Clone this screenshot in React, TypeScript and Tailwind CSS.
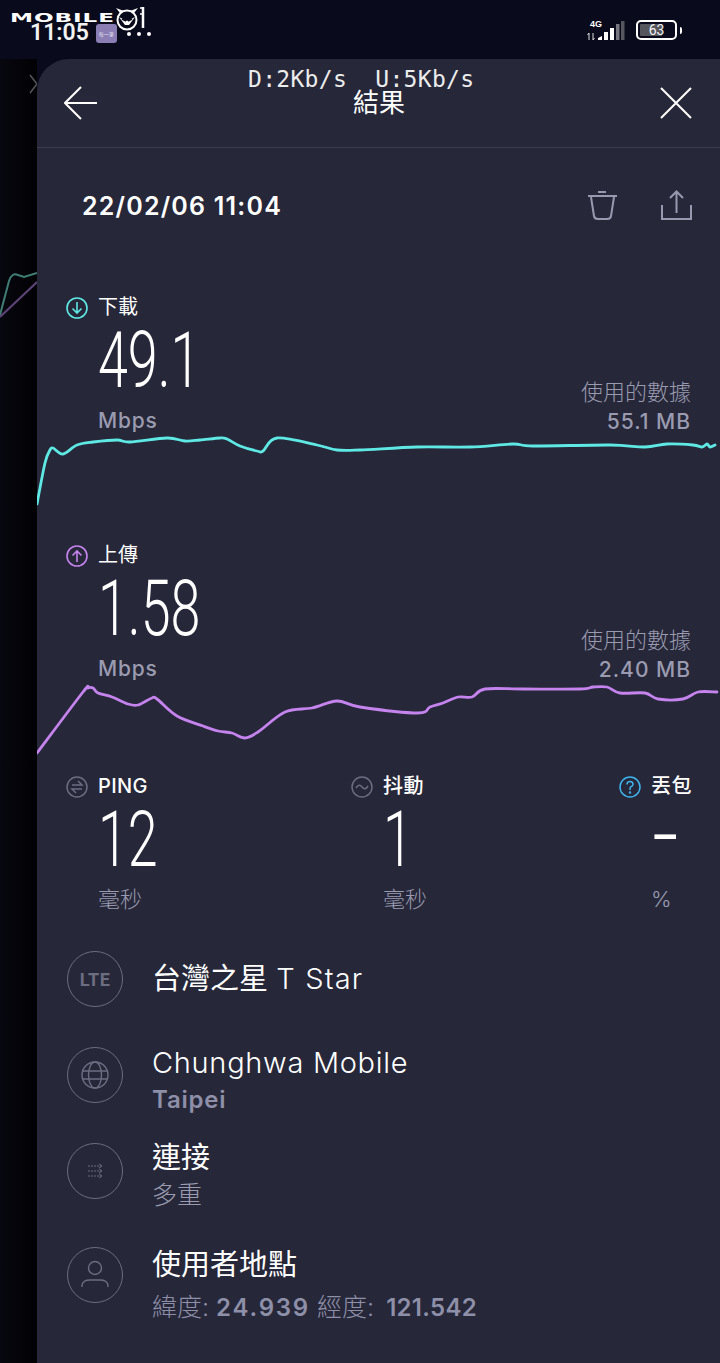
const sans = "font-['Inter','Noto_Sans_CJK_TC',sans-serif]";

const downloadPoints = [
  [0, 68], [8, 27], [13, 14], [16, 12], [26, 18], [40, 9], [56, 6], [80, 4], [93, 6], [130, 2], [148, 5], [163, 4],
  [183, 2], [190, 3], [203, 10], [220, 15], [226, 15], [240, 2], [280, 9], [300, 14], [323, 14], [380, 11], [433, 11],
  [476, 8], [496, 10], [573, 9], [608, 11], [630, 8], [656, 9], [665, 11], [670, 8], [673, 11], [678, 9],
];
const uploadPoints = [
  [0, 69], [46, 8], [51, 4], [56, 4], [61, 9], [75, 13], [91, 20], [101, 21], [115, 14], [120, 15], [140, 32], [166, 42],
  [181, 47], [195, 49], [208, 54], [221, 48], [248, 28], [275, 24], [300, 17], [323, 23], [381, 29], [393, 23], [406, 19],
  [421, 13], [435, 13], [448, 5], [486, 5], [543, 5], [556, 3], [570, 3], [583, 9], [608, 9], [621, 15], [646, 15],
  [661, 8], [680, 8],
];

// catmull-rom through the samples so the graph stays soft
function smooth(points: number[][]) {
  let d = `M${points[0][0]} ${points[0][1]}`;
  for (let i = 0; i < points.length - 1; i++) {
    const p0 = points[Math.max(i - 1, 0)];
    const p1 = points[i];
    const p2 = points[i + 1];
    const p3 = points[Math.min(i + 2, points.length - 1)];
    const c1x = p1[0] + (p2[0] - p0[0]) / 6;
    const c1y = p1[1] + (p2[1] - p0[1]) / 6;
    const c2x = p2[0] - (p3[0] - p1[0]) / 6;
    const c2y = p2[1] - (p3[1] - p1[1]) / 6;
    d += ` C${c1x.toFixed(1)} ${c1y.toFixed(1)} ${c2x.toFixed(1)} ${c2y.toFixed(1)} ${p2[0]} ${p2[1]}`;
  }
  return d;
}

function StatusBar() {
  return (
    <div className="relative flex h-[59px] items-start justify-between bg-[#090a1b] pl-[30px] pr-[38px] pt-[21px]">
      <div className="flex items-center">
        <span className="font-['Roboto',sans-serif] text-[23px] font-semibold leading-[24px] text-[#f2f2f2]">11:05</span>
        <div className="ml-[7px] mt-[1px] flex h-[19px] w-[21px] items-center justify-center rounded-[3px] bg-[#8a7eb4]">
          <span className="font-['Noto_Sans_CJK_TC',sans-serif] text-[5px] leading-none text-[#e8e4f4]">每一筆</span>
        </div>
        <div className="ml-[10px] mt-[1px] flex gap-[6px]">
          <span className="h-[4px] w-[4px] rounded-full bg-white" />
          <span className="h-[4px] w-[4px] rounded-full bg-white" />
          <span className="h-[4px] w-[4px] rounded-full bg-white" />
        </div>
      </div>
      <div className="-mt-[1px] flex items-center gap-[11px]">
        <div className="relative h-[20px] w-[38px]">
          <span className="absolute left-[3px] top-[-1px] font-['Liberation_Sans',sans-serif] text-[9px] font-bold leading-[11px] text-white">4G</span>
          <svg width="38" height="20" viewBox="0 0 38 20" className="absolute left-0 top-0">
            <path d="M2 13v7M0.5 15l1.5-2M6 13v7M7.5 18l-1.5 2" stroke="#ddd" strokeWidth="1" fill="none" />
            <path d="M11 20v-2l4-2v4z" fill="#fff" />
            <rect x="17" y="12" width="4" height="8" fill="#fff" />
            <rect x="23" y="8" width="4" height="12" fill="#fff" />
            <rect x="29" y="4" width="3.5" height="16" fill="#77787f" />
            <rect x="34" y="1" width="3.5" height="19" fill="#55565e" />
          </svg>
        </div>
        <div className="flex items-center gap-[3px]">
          <div className="relative flex h-[20px] w-[41px] items-center overflow-hidden rounded-[5px] border-2 border-white">
            <div className="ml-[2px] h-[12px] w-[22px] rounded-[1px] bg-[#55565e]" />
            <span className="absolute inset-0 text-center font-['Roboto',sans-serif] text-[14px] leading-[16px] text-[#f2f2f2]">63</span>
          </div>
          <div className="h-[7px] w-[2px] rounded-r-sm bg-white" />
        </div>
      </div>
      {/* watermark sits on top of the status bar */}
      <div className="absolute left-[10px] top-[4px] flex items-start">
        <span className="mt-[7px] inline-block w-[102px] origin-left scale-x-[1.78] font-['DejaVu_Sans',sans-serif] text-[13px] font-bold leading-[14px] tracking-[0.5px] text-white">
          MOBILE
        </span>
        <svg width="32" height="32" viewBox="0 0 32 32" className="mt-[1px] ml-[3px]">
          <circle cx="12" cy="15" r="9.5" fill="none" stroke="#fff" strokeWidth="2" />
          <path d="M5 8 L1 3 L9 6 M19 8 L23 3 L15 6" fill="#fff" />
          <path d="M4 12 L12 16 L20 12 L14 20 L10 20z" fill="#fff" />
          <path d="M7 14 L11 16 M17 14 L13 16" stroke="#090a1b" strokeWidth="1.5" />
          <path d="M28 2 V23" stroke="#fff" strokeWidth="2.5" />
          <path d="M25 3 H28 M25 9 H28" stroke="#fff" strokeWidth="1.5" />
        </svg>
      </div>
    </div>
  );
}

function BackdropStrip() {
  return (
    <div className="w-[37px] shrink-0 bg-gradient-to-r from-[#07070f] to-[#020205]">
      <svg width="37" height="340" viewBox="0 0 37 340">
        <path d="M30 16 L37 25 L30 34" fill="none" stroke="#55565c" strokeWidth="1.5" />
        <path d="M0 256 L9 222 Q12 213 18 216 L24 218 L37 214" fill="none" stroke="#3f7d75" strokeWidth="2" />
        <path d="M0 258 L37 223" fill="none" stroke="#5d4378" strokeWidth="2" />
      </svg>
    </div>
  );
}

function Header() {
  return (
    <div className="relative flex h-[89px] items-center justify-between border-b border-[#3a3b4d] pl-[27px] pr-[28px]">
      <svg width="34" height="34" viewBox="0 0 34 34" fill="none" stroke="#fff" strokeWidth="2">
        <path d="M33 17 H2 M17 1 L1 17 L17 33" />
      </svg>
      <span className={`${sans} text-[26px] leading-[32px] text-white`}>結果</span>
      <svg width="32" height="32" viewBox="0 0 32 32" fill="none" stroke="#fff" strokeWidth="2">
        <path d="M1 1 L31 31 M31 1 L1 31" />
      </svg>
      {/* network speed overlay */}
      <span className="absolute left-[211px] top-[7px] whitespace-pre font-['DejaVu_Sans_Mono',monospace] text-[23px] leading-[26px] tracking-[0.3px] text-[#ececec]">
        D:2Kb/s  U:5Kb/s
      </span>
    </div>
  );
}

function DateRow() {
  return (
    <div className="flex h-[116px] items-center justify-between pl-[45px] pr-[28px]">
      <span className={`${sans} text-[25px] font-semibold leading-[32px] tracking-[1.2px] text-white`}>22/02/06 11:04</span>
      <div className="flex items-center gap-[42px]">
        <svg width="32" height="32" viewBox="0 0 32 32" fill="none" stroke="#9899ae" strokeWidth="2">
          <path d="M1 6 H30 M11 2 H19 M4 7 L7 26 Q7.5 29 11 29 H20 Q23.500 29 24 26 L27 7" />
        </svg>
        <svg width="31" height="32" viewBox="0 0 31 32" fill="none" stroke="#9899ae" strokeWidth="2">
          <path d="M1 15 V29 H30 V15 M15.500 23 V2 M9 8 L15.500 1.500 L22 8" />
        </svg>
      </div>
    </div>
  );
}

function BigNumber({ value }: { value: string }) {
  return (
    <div className="h-[80px] w-[140px] origin-left scale-x-[0.69] whitespace-nowrap font-['Roboto',sans-serif] text-[78px] font-light leading-[80px] text-white">
      {value}
    </div>
  );
}

function SpeedSection({
  label,
  value,
  used,
  color,
  up,
  points,
  chartHeight,
}: {
  label: string;
  value: string;
  used: string;
  color: string;
  up: boolean;
  points: number[][];
  chartHeight: number;
}) {
  return (
    <div>
      <div className="flex items-end justify-between px-[29px]">
        <div>
          <div className="flex h-[27px] items-center gap-[10px]">
            <svg width="22" height="22" viewBox="0 0 22 22" fill="none" stroke={color} strokeWidth="1.6">
              <circle cx="11" cy="11" r="10" />
              {up ? <path d="M11 17 V6 M6.500 10.500 L11 6 L15.500 10.500" /> : <path d="M11 5 V16 M6.500 11.500 L11 16 L15.500 11.500" />}
            </svg>
            <span className={`${sans} text-[20px] leading-[25px] text-white`}>{label}</span>
          </div>
          <div className="pl-[32px]">
            <BigNumber value={value} />
            <div className={`${sans} mt-[5px] text-[21px] font-medium leading-[30px] tracking-[0.8px] text-[#9a9bb0]`}>Mbps</div>
          </div>
        </div>
        <div className={`${sans} text-right leading-[29px] text-[#9a9bb0]`}>
          <div className="text-[22px] font-light">使用的數據</div>
          <div className="text-[21px] font-medium tracking-[1px]">{used}</div>
        </div>
      </div>
      <svg width="683" height={chartHeight} viewBox={`0 0 683 ${chartHeight}`} className="block" fill="none" stroke={color} strokeWidth="2.800" strokeLinejoin="round" strokeLinecap="round">
        <path d={smooth(points)} />
      </svg>
    </div>
  );
}

function Stat({
  width,
  label,
  value,
  unit,
  icon,
}: {
  width: string;
  label: string;
  value: string;
  unit: string;
  icon: React.ReactNode;
}) {
  return (
    <div className={width}>
      <div className="flex h-[27px] items-center gap-[10px]">
        {icon}
        <span className={`${sans} text-[20px] font-medium leading-[25px] tracking-[0.4px] text-white`}>{label}</span>
      </div>
      <div className="pl-[32px]">
        {value === "-" ? (
          <div className="h-[80px] origin-left scale-x-[0.71] font-['Roboto',sans-serif] text-[62px] leading-[76px] text-white">–</div>
        ) : (
          <BigNumber value={value} />
        )}
        <div className={`${sans} mt-[4px] text-[22px] font-light leading-[30px] text-[#9a9bb0]`}>{unit}</div>
      </div>
    </div>
  );
}

function Circle({ children }: { children: React.ReactNode }) {
  return (
    <div className="flex h-[56px] w-[56px] shrink-0 items-center justify-center rounded-full border-[1.5px] border-[#6c6d80]">
      {children}
    </div>
  );
}

function Details() {
  return (
    <div className="mt-[37px] pl-[30px]">
      <div className="flex h-[96px] items-start gap-[29px]">
        <Circle>
          <span className="font-['Roboto',sans-serif] text-[18px] font-bold tracking-[0.5px] text-[#6c6d80]">LTE</span>
        </Circle>
        <span className={`${sans} mt-[12px] text-[29px] leading-[32px] text-white`}>
          台灣之星 <span className="text-[29px] font-light tracking-[1.2px]">T Star</span>
        </span>
      </div>
      <div className="flex h-[96px] items-start gap-[29px]">
        <Circle>
          <svg width="28" height="28" viewBox="0 0 28 28" fill="none" stroke="#6c6d80" strokeWidth="1.4">
            <circle cx="14" cy="14" r="13" />
            <ellipse cx="14" cy="14" rx="6.500" ry="13" />
            <path d="M1 10 H27 M1 18 H27" />
          </svg>
        </Circle>
        <div>
          <div className={`${sans} text-[29px] font-light leading-[32px] tracking-[0.7px] text-white`}>Chunghwa Mobile</div>
          <div className={`${sans} mt-[7px] text-[24px] font-semibold leading-[28px] tracking-[0.8px] text-[#8e8fa8]`}>Taipei</div>
        </div>
      </div>
      <div className="flex h-[104px] items-start gap-[29px]">
        <Circle>
          <svg width="16" height="16" viewBox="0 0 16 16" fill="none" stroke="#6c6d80" strokeWidth="1">
            <path d="M1 3 H14 M1 8 H14 M1 13 H14" strokeDasharray="2 1" />
            <path d="M12 1 L15 3 L12 5 M12 6 L15 8 L12 10 M12 11 L15 13 L12 15" />
          </svg>
        </Circle>
        <div className="-mt-[1px]">
          <div className={`${sans} text-[29px] leading-[32px] text-white`}>連接</div>
          <div className={`${sans} mt-[7px] text-[25px] font-light leading-[28px] text-[#9a9bb0]`}>多重</div>
        </div>
      </div>
      <div className="flex items-start gap-[29px]">
        <Circle>
          <svg width="30" height="30" viewBox="0 0 30 30" fill="none" stroke="#6c6d80" strokeWidth="1.4">
            <circle cx="15" cy="8" r="6.500" />
            <path d="M2 27 V25 Q3 20 10 20 H20 Q27 20 28 25 V27" />
          </svg>
        </Circle>
        <div className="mt-[2px]">
          <div className={`${sans} text-[29px] leading-[32px] text-white`}>使用者地點</div>
          <div className={`${sans} mt-[12px] whitespace-pre leading-[28px] text-[#8e8fa8]`}>
            <span className="text-[25px] font-light">緯度: </span>
            <span className="text-[24px] font-semibold tracking-[1.8px]">24.939</span>
            <span className="text-[25px] font-light"> 經度: </span>
            <span className="ml-[5px] text-[24px] font-semibold tracking-[0.3px]">121.542</span>
          </div>
        </div>
      </div>
    </div>
  );
}

export default function App() {
  return (
    <div className="h-[1363px] w-[720px] overflow-hidden bg-[#090a1b]">
      <StatusBar />
      <div className="flex h-[1304px]">
        <BackdropStrip />
        <div className="w-[683px] rounded-tl-[32px] bg-[#262739]">
          <Header />
          <DateRow />
          <div className="mt-[30px]">
            <SpeedSection label="下載" value="49.1" used="55.1 MB" color="#5fe9e4" up={false} points={downloadPoints} chartHeight={106} />
            <SpeedSection label="上傳" value="1.58" used="2.40 MB" color="#c583ee" up={true} points={uploadPoints} chartHeight={89} />
          </div>
          <div className="flex pl-[29px]">
            <Stat
              width="w-[285px]"
              label="PING"
              value="12"
              unit="毫秒"
              icon={
                <svg width="22" height="22" viewBox="0 0 22 22" fill="none" stroke="#6c6d80" strokeWidth="1.500">
                  <circle cx="11" cy="11" r="10" />
                  <path d="M6 9 H16 L12 5 M16 13 H6 L10 17" />
                </svg>
              }
            />
            <Stat
              width="w-[268px]"
              label="抖動"
              value="1"
              unit="毫秒"
              icon={
                <svg width="22" height="22" viewBox="0 0 22 22" fill="none" stroke="#6c6d80" strokeWidth="1.500">
                  <circle cx="11" cy="11" r="10" />
                  <path d="M5 12 Q8 7 11 11 T17 10" />
                </svg>
              }
            />
            <Stat
              width="w-[100px]"
              label="丟包"
              value="-"
              unit="%"
              icon={
                <svg width="22" height="22" viewBox="0 0 22 22" fill="none" stroke="#3fb4ee" strokeWidth="1.500">
                  <circle cx="11" cy="11" r="10" />
                  <path d="M8 8.500 Q8 5.500 11 5.500 Q14 5.500 14 8.500 Q14 10 11.500 11 Q11 11.500 11 14" />
                  <circle cx="11" cy="16.500" r="0.500" />
                </svg>
              }
            />
          </div>
          <Details />
        </div>
      </div>
    </div>
  );
}
